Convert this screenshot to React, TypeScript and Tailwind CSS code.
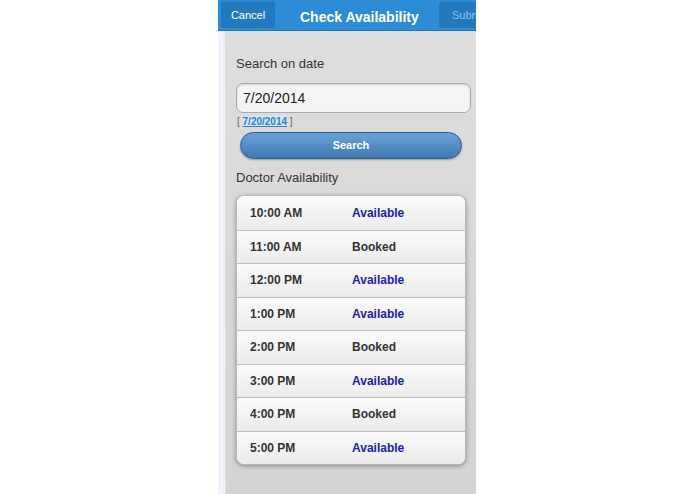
import React from 'react';

const slots = [
  { time: '10:00 AM', status: 'Available' },
  { time: '11:00 AM', status: 'Booked' },
  { time: '12:00 PM', status: 'Available' },
  { time: '1:00 PM', status: 'Available' },
  { time: '2:00 PM', status: 'Booked' },
  { time: '3:00 PM', status: 'Available' },
  { time: '4:00 PM', status: 'Booked' },
  { time: '5:00 PM', status: 'Available' },
];

const App = () => {
  return (
    <div className="w-[695px] h-[494px] bg-white overflow-hidden font-['Liberation_Sans',Arial,sans-serif]">
      <div className="ml-[218px] w-[258px] h-full flex flex-col overflow-hidden">
        {/* Header */}
        <div className="h-[31px] shrink-0 bg-[#2c8dd6] border-b border-[#1f74b8] flex items-center relative">
          <button className="ml-[3px] h-[26px] w-[54px] rounded-[3px] bg-[#2379be] text-white text-[11px] shadow-[inset_0_0_1px_rgba(0,0,0,0.2)]">
            Cancel
          </button>
          <h1 className="absolute left-[82px] top-[7px] text-white text-[14px] font-bold">
            Check Availability
          </h1>
          <div className="absolute left-[221px] top-[2px] h-[26px] w-[37px] rounded-l-[3px] bg-[#2379be] text-[#8fc0ea] text-[11px] flex items-center pl-[13px] overflow-hidden whitespace-nowrap">
            Subm
          </div>
        </div>

        {/* Body */}
        <div className="flex flex-1">
          <div className="w-[8px] bg-[#f0f3f8] border-r border-[#d9dde3]" />
          <div className="flex-1 bg-gradient-to-b from-[#dedede] to-[#d3d3d3] pl-[10px] pr-[5px] pt-[25px]">
            <p className="text-[13px] text-[#333] leading-[16px]">Search on date</p>
            <div className="mt-[11px] h-[30px] rounded-[7px] border border-[#a9a9a9] bg-[#f4f4f4] shadow-[inset_0_1px_2px_rgba(0,0,0,0.15)] flex items-center pl-[6px] text-[14px] text-[#222]">
              7/20/2014
            </div>
            <p className="mt-[2px] text-[10px] leading-[13px] text-[#666] pl-[1px]">
              [ <span className="font-bold underline text-[#2a7fc9] bg-[#d8e8f5]">7/20/2014</span> ]
            </p>
            <button className="mt-[4px] ml-[4px] w-[222px] h-[27px] rounded-full border border-[#2c5b8c] bg-gradient-to-b from-[#6aa3d8] to-[#3f79b3] text-white text-[11px] font-bold shadow-[0_1px_2px_rgba(0,0,0,0.3)]">
              Search
            </button>
            <p className="mt-[11px] text-[13px] text-[#333] leading-[16px]">Doctor Availability</p>
            <div className="mt-[9px] w-[230px] rounded-[8px] border border-[#b8b8b8] bg-white shadow-[0_1px_4px_rgba(0,0,0,0.35)] overflow-hidden">
              {slots.map((s, i) => (
                <div
                  key={s.time}
                  className={`h-[33.5px] flex items-center bg-gradient-to-b from-[#fbfbfb] to-[#ebebeb] text-[12px] font-bold ${i > 0 ? 'border-t border-[#bdbdbd]' : ''}`}
                >
                  <span className="w-[115px] pl-[13px] text-[#333]">{s.time}</span>
                  <span className={s.status === 'Available' ? 'text-[#1d1db0]' : 'text-[#333]'}>{s.status}</span>
                </div>
              ))}
            </div>
          </div>
        </div>
      </div>
    </div>
  );
};

export default App;
